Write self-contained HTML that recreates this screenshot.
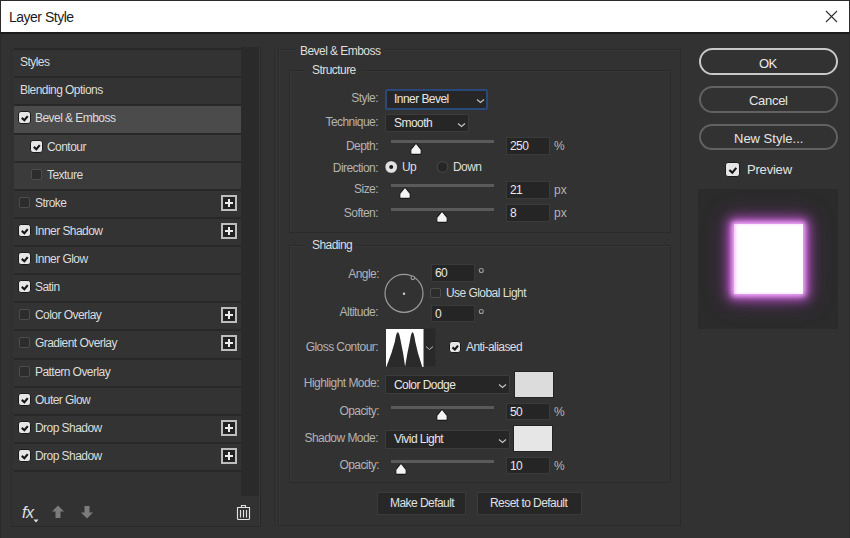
<!DOCTYPE html>
<html><head><meta charset="utf-8">
<style>
*{margin:0;padding:0;box-sizing:border-box}
html,body{width:850px;height:538px;overflow:hidden;background:#323232}
body{position:relative;font-family:"Liberation Sans",sans-serif;font-size:12px;color:#d8d8d8}
.a{position:absolute}
.t{position:absolute;white-space:nowrap;line-height:1}
.it{position:absolute;left:14px;width:227px;background:#333333;border-top:2px solid #282828}
.plus{position:absolute;width:16px;height:16px;border:2px solid #bdbdbd;background:#222}
.plus:before{content:"";position:absolute;left:2px;top:4.8px;width:8px;height:2.4px;background:#ececec}
.plus:after{content:"";position:absolute;left:4.8px;top:2px;width:2.4px;height:8px;background:#ececec}
.gb{position:absolute;border:1px solid #2a2a2a;box-shadow:inset 1px 1px 0 #373737}
.dd{position:absolute;background:#262626;border:1px solid #2e2e2e}
.inp{position:absolute;background:#252525;border:1px solid #3a3a3a}
.trk{position:absolute;height:3px;background:#5a5a5a}
.btn{position:absolute;border-radius:14px;text-align:center;font-size:13px;color:#e8e8e8;letter-spacing:-0.3px}
.btn2{position:absolute;background:#272727;border:1px solid #3b3b3b}
</style></head><body>
<div class="a" style="left:0;top:0;width:850px;height:33px;background:#ffffff;border-top:1px solid #2b2b2b;border-left:1px solid #2b2b2b;border-right:1px solid #2b2b2b"></div>
<div class="a" style="left:0;top:32px;width:850px;height:2px;background:#1c1c1c"></div>
<div class="t" style="left:9px;top:10px;font-size:14px;color:#1c1c24;letter-spacing:-0.5px;">Layer Style</div>
<svg class="a" style="left:825px;top:10px" width="13" height="13" viewBox="0 0 13 13"><path d="M1 1L12 12M12 1L1 12" stroke="#303030" stroke-width="1.1" fill="none"/></svg>
<div class="a" style="left:0;top:33px;width:1px;height:505px;background:#2b2b2b"></div>
<div class="a" style="left:849px;top:33px;width:1px;height:505px;background:#2b2b2b"></div>
<div class="a" style="left:11px;top:47px;width:250px;height:480px;border-left:1px solid #2e2e2e;border-right:1px solid #282828;border-bottom:1px solid #282828;box-shadow:inset -1px 0 0 #3a3a3a"></div>
<div class="a" style="left:241px;top:47px;width:18px;height:449px;background:#2a2a2a"></div>
<div class="it" style="top:48px;height:28px;background:#333333"></div>
<div class="t" style="left:20px;top:56px;font-size:12px;color:#dcdcdc;letter-spacing:-0.55px;">Styles</div>
<div class="it" style="top:76px;height:28px;background:#333333"></div>
<div class="t" style="left:20px;top:84px;font-size:12px;color:#dcdcdc;letter-spacing:-0.55px;">Blending Options</div>
<div class="it" style="top:104px;height:29px;background:#4b4b4b"></div>
<svg class="a" style="left:18px;top:111px" width="13" height="13" viewBox="0 0 13 13"><rect x="0.5" y="0.5" width="12" height="12" rx="2.5" fill="#e6e6e6" stroke="#1c1c1c" stroke-width="1"/><path d="M3.77 6.89L6.37 9.23L9.75 5.07" stroke="#161616" stroke-width="2.1" fill="none"/></svg>
<div class="t" style="left:35px;top:112px;font-size:12px;color:#dcdcdc;letter-spacing:-0.55px;">Bevel &amp; Emboss</div>
<div class="it" style="top:133px;height:28px;background:#3b3b3b"></div>
<svg class="a" style="left:30px;top:140px" width="13" height="13" viewBox="0 0 13 13"><rect x="0.5" y="0.5" width="12" height="12" rx="2.5" fill="#e6e6e6" stroke="#1c1c1c" stroke-width="1"/><path d="M3.77 6.89L6.37 9.23L9.75 5.07" stroke="#161616" stroke-width="2.1" fill="none"/></svg>
<div class="t" style="left:47px;top:141px;font-size:12px;color:#dcdcdc;letter-spacing:-0.55px;">Contour</div>
<div class="it" style="top:161px;height:28px;background:#3b3b3b"></div>
<div class="a" style="left:31px;top:169px;width:11px;height:11px;border:1px solid #4c4c4c;border-radius:2px;background:#2c2c2c"></div>
<div class="t" style="left:47px;top:169px;font-size:12px;color:#dcdcdc;letter-spacing:-0.55px;">Texture</div>
<div class="it" style="top:189px;height:28px;background:#333333"></div>
<div class="a" style="left:19px;top:197px;width:11px;height:11px;border:1px solid #4c4c4c;border-radius:2px;background:#2c2c2c"></div>
<div class="t" style="left:35px;top:197px;font-size:12px;color:#dcdcdc;letter-spacing:-0.55px;">Stroke</div>
<div class="plus" style="left:221px;top:195px"></div>
<div class="it" style="top:217px;height:28px;background:#333333"></div>
<svg class="a" style="left:18px;top:224px" width="13" height="13" viewBox="0 0 13 13"><rect x="0.5" y="0.5" width="12" height="12" rx="2.5" fill="#e6e6e6" stroke="#1c1c1c" stroke-width="1"/><path d="M3.77 6.89L6.37 9.23L9.75 5.07" stroke="#161616" stroke-width="2.1" fill="none"/></svg>
<div class="t" style="left:35px;top:225px;font-size:12px;color:#dcdcdc;letter-spacing:-0.55px;">Inner Shadow</div>
<div class="plus" style="left:221px;top:223px"></div>
<div class="it" style="top:245px;height:28px;background:#333333"></div>
<svg class="a" style="left:18px;top:252px" width="13" height="13" viewBox="0 0 13 13"><rect x="0.5" y="0.5" width="12" height="12" rx="2.5" fill="#e6e6e6" stroke="#1c1c1c" stroke-width="1"/><path d="M3.77 6.89L6.37 9.23L9.75 5.07" stroke="#161616" stroke-width="2.1" fill="none"/></svg>
<div class="t" style="left:35px;top:253px;font-size:12px;color:#dcdcdc;letter-spacing:-0.55px;">Inner Glow</div>
<div class="it" style="top:273px;height:28px;background:#333333"></div>
<svg class="a" style="left:18px;top:280px" width="13" height="13" viewBox="0 0 13 13"><rect x="0.5" y="0.5" width="12" height="12" rx="2.5" fill="#e6e6e6" stroke="#1c1c1c" stroke-width="1"/><path d="M3.77 6.89L6.37 9.23L9.75 5.07" stroke="#161616" stroke-width="2.1" fill="none"/></svg>
<div class="t" style="left:35px;top:281px;font-size:12px;color:#dcdcdc;letter-spacing:-0.55px;">Satin</div>
<div class="it" style="top:301px;height:28px;background:#333333"></div>
<div class="a" style="left:19px;top:309px;width:11px;height:11px;border:1px solid #4c4c4c;border-radius:2px;background:#2c2c2c"></div>
<div class="t" style="left:35px;top:309px;font-size:12px;color:#dcdcdc;letter-spacing:-0.55px;">Color Overlay</div>
<div class="plus" style="left:221px;top:307px"></div>
<div class="it" style="top:329px;height:29px;background:#333333"></div>
<div class="a" style="left:19px;top:337px;width:11px;height:11px;border:1px solid #4c4c4c;border-radius:2px;background:#2c2c2c"></div>
<div class="t" style="left:35px;top:337px;font-size:12px;color:#dcdcdc;letter-spacing:-0.55px;">Gradient Overlay</div>
<div class="plus" style="left:221px;top:335px"></div>
<div class="it" style="top:358px;height:28px;background:#333333"></div>
<div class="a" style="left:19px;top:366px;width:11px;height:11px;border:1px solid #4c4c4c;border-radius:2px;background:#2c2c2c"></div>
<div class="t" style="left:35px;top:366px;font-size:12px;color:#dcdcdc;letter-spacing:-0.55px;">Pattern Overlay</div>
<div class="it" style="top:386px;height:28px;background:#333333"></div>
<svg class="a" style="left:18px;top:393px" width="13" height="13" viewBox="0 0 13 13"><rect x="0.5" y="0.5" width="12" height="12" rx="2.5" fill="#e6e6e6" stroke="#1c1c1c" stroke-width="1"/><path d="M3.77 6.89L6.37 9.23L9.75 5.07" stroke="#161616" stroke-width="2.1" fill="none"/></svg>
<div class="t" style="left:35px;top:394px;font-size:12px;color:#dcdcdc;letter-spacing:-0.55px;">Outer Glow</div>
<div class="it" style="top:414px;height:28px;background:#333333"></div>
<svg class="a" style="left:18px;top:421px" width="13" height="13" viewBox="0 0 13 13"><rect x="0.5" y="0.5" width="12" height="12" rx="2.5" fill="#e6e6e6" stroke="#1c1c1c" stroke-width="1"/><path d="M3.77 6.89L6.37 9.23L9.75 5.07" stroke="#161616" stroke-width="2.1" fill="none"/></svg>
<div class="t" style="left:35px;top:422px;font-size:12px;color:#dcdcdc;letter-spacing:-0.55px;">Drop Shadow</div>
<div class="plus" style="left:221px;top:420px"></div>
<div class="it" style="top:442px;height:28px;background:#333333"></div>
<svg class="a" style="left:18px;top:449px" width="13" height="13" viewBox="0 0 13 13"><rect x="0.5" y="0.5" width="12" height="12" rx="2.5" fill="#e6e6e6" stroke="#1c1c1c" stroke-width="1"/><path d="M3.77 6.89L6.37 9.23L9.75 5.07" stroke="#161616" stroke-width="2.1" fill="none"/></svg>
<div class="t" style="left:35px;top:450px;font-size:12px;color:#dcdcdc;letter-spacing:-0.55px;">Drop Shadow</div>
<div class="plus" style="left:221px;top:448px"></div>
<div class="a" style="left:14px;top:470px;width:227px;height:2px;background:#282828"></div>
<div class="t" style="left:22px;top:505px;font-size:16px;font-style:italic;color:#e0e0e0;letter-spacing:-0.5px">fx</div>
<svg class="a" style="left:33px;top:519px" width="6" height="4" viewBox="0 0 6 4"><path d="M0.5 0.5L5.5 0.5L3 3.5Z" fill="#e0e0e0"/></svg>
<svg class="a" style="left:51px;top:505px" width="14" height="14" viewBox="0 0 14 14"><path d="M7 0.5L13 6.5L9.5 6.5L9.5 13L4.5 13L4.5 6.5L1 6.5Z" fill="#7c7c7c"/></svg>
<svg class="a" style="left:80px;top:505px" width="14" height="14" viewBox="0 0 14 14"><path d="M7 13.5L13 7.5L9.5 7.5L9.5 1L4.5 1L4.5 7.5L1 7.5Z" fill="#7c7c7c"/></svg>
<svg class="a" style="left:236px;top:504px" width="15" height="17" viewBox="0 0 15 17"><path d="M1 3.5H14M5.5 3V1.5H9.5V3M1.5 4V14.5Q1.5 15.5 2.5 15.5H12.5Q13.5 15.5 13.5 14.5V4M4.5 6V13.5M7.5 6V13.5M10.5 6V13.5" stroke="#e0e0e0" stroke-width="1.15" fill="none"/></svg>
<div class="a" style="left:274px;top:48px;width:1px;height:479px;background:#2c2c2c"></div>
<div class="gb" style="left:278px;top:49px;width:403px;height:477px"></div>
<div class="gb" style="left:289px;top:70px;width:382px;height:163px"></div>
<div class="gb" style="left:289px;top:245px;width:382px;height:238px"></div>
<div class="a" style="left:294px;top:44px;width:90px;height:12px;background:#323232"></div>
<div class="t" style="left:300px;top:45px;font-size:12px;color:#dedede;letter-spacing:-0.55px;">Bevel &amp; Emboss</div>
<div class="a" style="left:306px;top:64px;width:56px;height:12px;background:#323232"></div>
<div class="t" style="left:312px;top:64px;font-size:12px;color:#dedede;letter-spacing:-0.55px;">Structure</div>
<div class="a" style="left:306px;top:239px;width:50px;height:12px;background:#323232"></div>
<div class="t" style="left:312px;top:239px;font-size:12px;color:#dedede;letter-spacing:-0.55px;">Shading</div>
<div class="t" style="right:472px;top:92px;font-size:12px;color:#b2b2b2;letter-spacing:-0.55px">Style:</div>
<div class="dd" style="left:385px;top:89px;width:103px;height:21px;border:2px solid #29497a;border-radius:2px"></div>
<div class="t" style="left:394px;top:93px;font-size:12px;color:#e6e6e6;letter-spacing:-0.55px;">Inner Bevel</div>
<svg class="a" style="left:476px;top:98.0px" width="9" height="6" viewBox="0 0 9 6"><path d="M1 1.5L4.5 4.5L8 1.5" stroke="#c4c4c4" stroke-width="1.2" fill="none"/></svg>
<div class="t" style="right:472px;top:116px;font-size:12px;color:#b2b2b2;letter-spacing:-0.55px">Technique:</div>
<div class="dd" style="left:385px;top:114px;width:84px;height:18px;border:1px solid #3c3c3c;border-radius:1px"></div>
<div class="t" style="left:394px;top:117px;font-size:12px;color:#e6e6e6;letter-spacing:-0.55px;">Smooth</div>
<svg class="a" style="left:457px;top:121.5px" width="9" height="6" viewBox="0 0 9 6"><path d="M1 1.5L4.5 4.5L8 1.5" stroke="#c4c4c4" stroke-width="1.2" fill="none"/></svg>
<div class="t" style="right:472px;top:140px;font-size:12px;color:#b2b2b2;letter-spacing:-0.55px">Depth:</div>
<div class="trk" style="left:391px;top:140px;width:103px"></div>
<svg class="a" style="left:409px;top:142px" width="14" height="13" viewBox="0 0 14 13"><path d="M7 1.6Q7.4 1.6 7.8 2.1L12.2 7.6V11Q12.2 12.4 10.8 12.4H3.2Q1.8 12.4 1.8 11V7.6L6.2 2.1Q6.6 1.6 7 1.6Z" fill="#f4f4f4" stroke="#181818" stroke-width="1.1"/></svg>
<div class="inp" style="left:506px;top:137px;width:44px;height:18px"></div>
<div class="t" style="left:510px;top:140px;font-size:12px;color:#e8e8e8;letter-spacing:-0.55px;">250</div>
<div class="t" style="left:554px;top:140px;font-size:12px;color:#b4b4b4;letter-spacing:0;">%</div>
<div class="t" style="right:472px;top:162px;font-size:12px;color:#b2b2b2;letter-spacing:-0.55px">Direction:</div>
<svg class="a" style="left:384px;top:160px" width="14" height="14" viewBox="0 0 14 14"><circle cx="7.2" cy="7" r="6.3" fill="#e2e2e2" stroke="#1e1e1e" stroke-width="0.8"/><circle cx="7.2" cy="7" r="2" fill="#1a1a1a"/></svg>
<div class="t" style="left:402px;top:161px;font-size:12px;color:#dedede;letter-spacing:-0.55px;">Up</div>
<svg class="a" style="left:436px;top:160px" width="14" height="14" viewBox="0 0 14 14"><circle cx="6.5" cy="7" r="5.3" fill="#262626" stroke="#4a4a4a" stroke-width="1"/></svg>
<div class="t" style="left:453px;top:161px;font-size:12px;color:#dedede;letter-spacing:-0.55px;">Down</div>
<div class="t" style="right:472px;top:183px;font-size:12px;color:#b2b2b2;letter-spacing:-0.55px">Size:</div>
<div class="trk" style="left:391px;top:184px;width:103px"></div>
<svg class="a" style="left:398px;top:186px" width="14" height="13" viewBox="0 0 14 13"><path d="M7 1.6Q7.4 1.6 7.8 2.1L12.2 7.6V11Q12.2 12.4 10.8 12.4H3.2Q1.8 12.4 1.8 11V7.6L6.2 2.1Q6.6 1.6 7 1.6Z" fill="#f4f4f4" stroke="#181818" stroke-width="1.1"/></svg>
<div class="inp" style="left:506px;top:181px;width:44px;height:18px"></div>
<div class="t" style="left:510px;top:184px;font-size:12px;color:#e8e8e8;letter-spacing:-0.55px;">21</div>
<div class="t" style="left:554px;top:184px;font-size:12px;color:#b4b4b4;letter-spacing:0;">px</div>
<div class="t" style="right:472px;top:207px;font-size:12px;color:#b2b2b2;letter-spacing:-0.55px">Soften:</div>
<div class="trk" style="left:391px;top:208px;width:103px"></div>
<svg class="a" style="left:435px;top:210px" width="14" height="13" viewBox="0 0 14 13"><path d="M7 1.6Q7.4 1.6 7.8 2.1L12.2 7.6V11Q12.2 12.4 10.8 12.4H3.2Q1.8 12.4 1.8 11V7.6L6.2 2.1Q6.6 1.6 7 1.6Z" fill="#f4f4f4" stroke="#181818" stroke-width="1.1"/></svg>
<div class="inp" style="left:506px;top:204px;width:44px;height:18px"></div>
<div class="t" style="left:510px;top:207px;font-size:12px;color:#e8e8e8;letter-spacing:-0.55px;">8</div>
<div class="t" style="left:554px;top:207px;font-size:12px;color:#b4b4b4;letter-spacing:0;">px</div>
<div class="t" style="right:471px;top:268px;font-size:12px;color:#b2b2b2;letter-spacing:-0.55px">Angle:</div>
<div class="t" style="right:472px;top:306px;font-size:12px;color:#b2b2b2;letter-spacing:-0.55px">Altitude:</div>
<svg class="a" style="left:382px;top:272px" width="44" height="44" viewBox="0 0 44 44"><circle cx="22" cy="21.3" r="19" fill="none" stroke="#9c9c9c" stroke-width="1.2"/><circle cx="30.8" cy="5.8" r="1.8" fill="#323232" stroke="#9c9c9c" stroke-width="1.1"/><circle cx="22" cy="21.8" r="1.2" fill="#d0d0d0"/></svg>
<div class="inp" style="left:431px;top:264px;width:44px;height:18px"></div>
<div class="t" style="left:435px;top:267px;font-size:12px;color:#e8e8e8;letter-spacing:-0.55px;">60</div>
<svg class="a" style="left:477px;top:266px" width="9" height="9" viewBox="0 0 9 9"><circle cx="4.3" cy="4.5" r="2" fill="none" stroke="#9a9a9a" stroke-width="1.1"/></svg>
<div class="a" style="left:430px;top:288px;width:11px;height:10px;border:1px solid #4c4c4c;border-radius:2px;background:#2c2c2c"></div>
<div class="t" style="left:446px;top:287px;font-size:12px;color:#dedede;letter-spacing:-0.55px;">Use Global Light</div>
<div class="inp" style="left:431px;top:305px;width:44px;height:17px"></div>
<div class="t" style="left:435px;top:308px;font-size:12px;color:#e8e8e8;letter-spacing:-0.55px;">0</div>
<svg class="a" style="left:477px;top:307px" width="9" height="9" viewBox="0 0 9 9"><circle cx="4.3" cy="4.5" r="2" fill="none" stroke="#9a9a9a" stroke-width="1.1"/></svg>
<div class="t" style="right:472px;top:341px;font-size:12px;color:#b2b2b2;letter-spacing:-0.55px">Gloss Contour:</div>
<div class="a" style="left:423px;top:328px;width:13px;height:39px;background:#292929;border:1px solid #2e2e2e"></div>
<svg class="a" style="left:386px;top:328px" width="38" height="39" viewBox="0 0 38 39"><rect x="0" y="1" width="37.5" height="38" fill="#ffffff"/><path d="M0.3 39L5.4 25.3L8.9 13.6Q11.7 -5 14.8 13.6L17.1 25.3L19.1 38.5L21.4 25.3L23.8 13.6Q26.5 -5 29.25 13.6L32 25.3L36.3 39Z" fill="#2a2a2a"/></svg>
<svg class="a" style="left:425px;top:345px" width="9" height="6" viewBox="0 0 9 6"><path d="M1 1.5L4.5 4.5L8 1.5" stroke="#b8b8b8" stroke-width="1" fill="none"/></svg>
<svg class="a" style="left:449px;top:341px" width="12" height="12" viewBox="0 0 12 12"><rect x="0.5" y="0.5" width="11" height="11" rx="2.5" fill="#e6e6e6" stroke="#1c1c1c" stroke-width="1"/><path d="M3.48 6.36L5.88 8.52L9.00 4.68" stroke="#161616" stroke-width="2.1" fill="none"/></svg>
<div class="t" style="left:466px;top:341px;font-size:12px;color:#dedede;letter-spacing:-0.55px;">Anti-aliased</div>
<div class="t" style="right:471px;top:377px;font-size:12px;color:#b2b2b2;letter-spacing:-0.55px">Highlight Mode:</div>
<div class="dd" style="left:385px;top:375px;width:125px;height:19px;border:1px solid #3c3c3c;border-radius:1px"></div>
<div class="t" style="left:394px;top:379px;font-size:12px;color:#e6e6e6;letter-spacing:-0.55px;">Color Dodge</div>
<svg class="a" style="left:498px;top:383.0px" width="9" height="6" viewBox="0 0 9 6"><path d="M1 1.5L4.5 4.5L8 1.5" stroke="#c4c4c4" stroke-width="1.2" fill="none"/></svg>
<div class="a" style="left:515px;top:372px;width:38px;height:25px;background:#dcdcdc;box-shadow:0 0 0 1px #242424"></div>
<div class="t" style="right:471px;top:405px;font-size:12px;color:#b2b2b2;letter-spacing:-0.55px">Opacity:</div>
<div class="trk" style="left:391px;top:406px;width:103px"></div>
<svg class="a" style="left:435px;top:408px" width="14" height="13" viewBox="0 0 14 13"><path d="M7 1.6Q7.4 1.6 7.8 2.1L12.2 7.6V11Q12.2 12.4 10.8 12.4H3.2Q1.8 12.4 1.8 11V7.6L6.2 2.1Q6.6 1.6 7 1.6Z" fill="#f4f4f4" stroke="#181818" stroke-width="1.1"/></svg>
<div class="inp" style="left:506px;top:403px;width:44px;height:17px"></div>
<div class="t" style="left:510px;top:406px;font-size:12px;color:#e8e8e8;letter-spacing:-0.55px;">50</div>
<div class="t" style="left:554px;top:406px;font-size:12px;color:#b4b4b4;letter-spacing:0;">%</div>
<div class="t" style="right:472px;top:432px;font-size:12px;color:#b2b2b2;letter-spacing:-0.55px">Shadow Mode:</div>
<div class="dd" style="left:385px;top:430px;width:125px;height:19px;border:1px solid #3c3c3c;border-radius:1px"></div>
<div class="t" style="left:394px;top:433px;font-size:12px;color:#e6e6e6;letter-spacing:-0.55px;">Vivid Light</div>
<svg class="a" style="left:498px;top:438.0px" width="9" height="6" viewBox="0 0 9 6"><path d="M1 1.5L4.5 4.5L8 1.5" stroke="#c4c4c4" stroke-width="1.2" fill="none"/></svg>
<div class="a" style="left:514px;top:426px;width:38px;height:25px;background:#e6e6e6;box-shadow:0 0 0 1px #242424"></div>
<div class="t" style="right:471px;top:459px;font-size:12px;color:#b2b2b2;letter-spacing:-0.55px">Opacity:</div>
<div class="trk" style="left:391px;top:460px;width:103px"></div>
<svg class="a" style="left:394px;top:462px" width="14" height="13" viewBox="0 0 14 13"><path d="M7 1.6Q7.4 1.6 7.8 2.1L12.2 7.6V11Q12.2 12.4 10.8 12.4H3.2Q1.8 12.4 1.8 11V7.6L6.2 2.1Q6.6 1.6 7 1.6Z" fill="#f4f4f4" stroke="#181818" stroke-width="1.1"/></svg>
<div class="inp" style="left:506px;top:457px;width:44px;height:17px"></div>
<div class="t" style="left:510px;top:460px;font-size:12px;color:#e8e8e8;letter-spacing:-0.55px;">10</div>
<div class="t" style="left:554px;top:460px;font-size:12px;color:#b4b4b4;letter-spacing:0;">%</div>
<div class="btn2" style="left:377px;top:492px;width:89px;height:23px"></div>
<div class="t" style="left:390px;top:497px;font-size:12px;color:#e0e0e0;letter-spacing:-0.55px;">Make Default</div>
<div class="btn2" style="left:477px;top:492px;width:105px;height:23px"></div>
<div class="t" style="left:490px;top:497px;font-size:12px;color:#e0e0e0;letter-spacing:-0.55px;">Reset to Default</div>
<div class="btn" style="left:699px;top:48px;width:139px;height:27px;border:2px solid #c8c8c8"></div>
<div class="t" style="left:759px;top:57px;font-size:13px;color:#ececec;letter-spacing:-0.5px;">OK</div>
<div class="btn" style="left:699px;top:86px;width:139px;height:27px;border:2px solid #626262"></div>
<div class="t" style="left:749px;top:94px;font-size:13px;color:#e6e6e6;letter-spacing:-0.3px;">Cancel</div>
<div class="btn" style="left:699px;top:124px;width:139px;height:26px;border:2px solid #626262"></div>
<div class="t" style="left:734px;top:132px;font-size:13px;color:#e6e6e6;letter-spacing:0px;">New Style...</div>
<svg class="a" style="left:725px;top:162px" width="15" height="15" viewBox="0 0 15 15"><rect x="0.5" y="0.5" width="14" height="14" rx="2.5" fill="#e6e6e6" stroke="#1c1c1c" stroke-width="1"/><path d="M4.35 7.95L7.35 10.65L11.25 5.85" stroke="#161616" stroke-width="2.1" fill="none"/></svg>
<div class="t" style="left:747px;top:163px;font-size:13px;color:#e4e4e4;letter-spacing:-0.2px;">Preview</div>
<div class="a" style="left:698px;top:189px;width:140px;height:140px;background:#2b2b2b"></div>
<div class="a" style="left:734px;top:224px;width:69px;height:70px;background:#fff;box-shadow:inset 2px 0 3px rgba(240,150,255,0.5),0 0 5px 2px #f6b4ff,0 0 11px 5px rgba(222,100,240,0.85),0 0 22px 7px rgba(150,50,170,0.45)"></div>
</body></html>
